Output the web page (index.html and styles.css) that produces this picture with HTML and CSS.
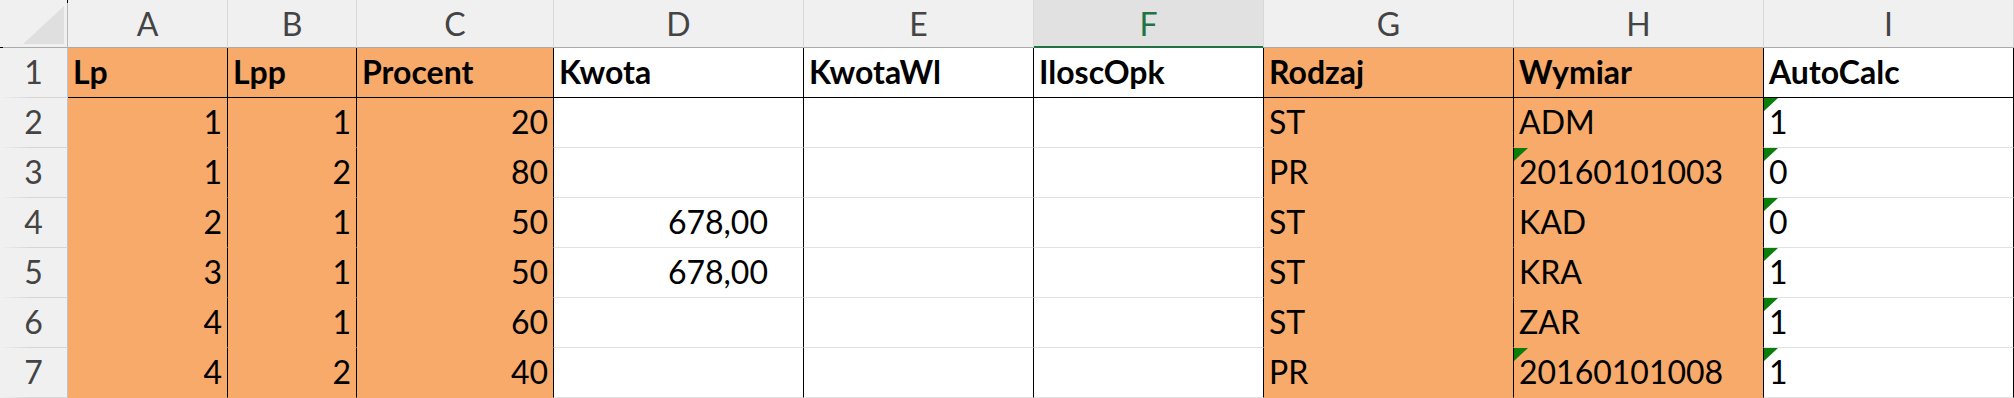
FILE: index.html
```html
<!DOCTYPE html>
<html lang="pl">
<head>
<meta charset="utf-8">
<title>Arkusz1</title>
<link rel="stylesheet" href="styles.css">
</head>
<body>
<div class="sheet">
  <div class="corner"><span class="corner-tri"></span></div>
  <div class="colhead">A</div>
  <div class="colhead">B</div>
  <div class="colhead">C</div>
  <div class="colhead">D</div>
  <div class="colhead">E</div>
  <div class="colhead sel">F</div>
  <div class="colhead">G</div>
  <div class="colhead">H</div>
  <div class="colhead">I</div>

  <div class="rowhead">1</div>
  <div class="cell fill title">Lp</div>
  <div class="cell fill title">Lpp</div>
  <div class="cell fill title">Procent</div>
  <div class="cell title">Kwota</div>
  <div class="cell title">KwotaWl</div>
  <div class="cell title">IloscOpk</div>
  <div class="cell fill title">Rodzaj</div>
  <div class="cell fill title">Wymiar</div>
  <div class="cell title">AutoCalc</div>

  <div class="rowhead">2</div>
  <div class="cell fill num">1</div>
  <div class="cell fill num">1</div>
  <div class="cell fill num">20</div>
  <div class="cell money"></div>
  <div class="cell"></div>
  <div class="cell"></div>
  <div class="cell fill">ST</div>
  <div class="cell fill">ADM</div>
  <div class="cell flag">1</div>

  <div class="rowhead">3</div>
  <div class="cell fill num">1</div>
  <div class="cell fill num">2</div>
  <div class="cell fill num">80</div>
  <div class="cell money"></div>
  <div class="cell"></div>
  <div class="cell"></div>
  <div class="cell fill">PR</div>
  <div class="cell fill flag">20160101003</div>
  <div class="cell flag">0</div>

  <div class="rowhead">4</div>
  <div class="cell fill num">2</div>
  <div class="cell fill num">1</div>
  <div class="cell fill num">50</div>
  <div class="cell money">678,00</div>
  <div class="cell"></div>
  <div class="cell"></div>
  <div class="cell fill">ST</div>
  <div class="cell fill">KAD</div>
  <div class="cell flag">0</div>

  <div class="rowhead">5</div>
  <div class="cell fill num">3</div>
  <div class="cell fill num">1</div>
  <div class="cell fill num">50</div>
  <div class="cell money">678,00</div>
  <div class="cell"></div>
  <div class="cell"></div>
  <div class="cell fill">ST</div>
  <div class="cell fill">KRA</div>
  <div class="cell flag">1</div>

  <div class="rowhead">6</div>
  <div class="cell fill num">4</div>
  <div class="cell fill num">1</div>
  <div class="cell fill num">60</div>
  <div class="cell money"></div>
  <div class="cell"></div>
  <div class="cell"></div>
  <div class="cell fill">ST</div>
  <div class="cell fill">ZAR</div>
  <div class="cell flag">1</div>

  <div class="rowhead">7</div>
  <div class="cell fill num">4</div>
  <div class="cell fill num">2</div>
  <div class="cell fill num">40</div>
  <div class="cell money"></div>
  <div class="cell"></div>
  <div class="cell"></div>
  <div class="cell fill">PR</div>
  <div class="cell fill flag">20160101008</div>
  <div class="cell flag">1</div>
</div>
</body>
</html>
```

FILE: styles.css
```css
* {
  box-sizing: border-box;
}

html,
body {
  margin: 0;
  padding: 0;
  background: #ffffff;
}

body {
  font-family: Lato, "Open Sans", "Liberation Sans", sans-serif;
  font-size: 32px;
  color: #000000;
}

/* worksheet grid: row-number column + columns A..I */
.sheet {
  display: grid;
  grid-template-columns: 68px 160px 129px 197px 250px 230px 230px 250px 250px 250px;
  grid-template-rows: 48px repeat(7, 50px);
  width: 2014px;
}

/* top-left select-all box */
.corner {
  position: relative;
  display: flex;
  align-items: flex-end;
  justify-content: flex-end;
  padding: 0 3px 3px 0;
  background: #f0f0f0;
  border-right: 1px solid #b9b9b9;
  border-bottom: 1px solid #ababab;
}

.corner::before {
  content: "";
  position: absolute;
  top: 0;
  right: -1px;
  width: 1px;
  height: 3px;
  background: #000000;
}

.corner::after {
  content: "";
  position: absolute;
  left: 0;
  bottom: -1px;
  width: 3px;
  height: 1px;
  background: #000000;
}

.corner-tri {
  width: 41px;
  height: 38px;
  background: #dfdfdf;
  clip-path: polygon(100% 0, 100% 100%, 0 100%);
}

/* column letters */
.colhead {
  display: flex;
  align-items: flex-end;
  justify-content: center;
  padding-bottom: 3px;
  line-height: 40px;
  color: #444444;
  background: #f0f0f0;
  border-right: 1px solid #d9d9d9;
  border-bottom: 1px solid #ababab;
}

.colhead.sel {
  color: #217346;
  background: #e1e1e1;
  border-bottom: 1px solid #217346;
  box-shadow: inset 0 -1px 0 #217346;
}

/* row numbers, separator fades in from the left */
.rowhead {
  display: flex;
  align-items: flex-end;
  justify-content: center;
  padding-bottom: 5px;
  line-height: 40px;
  color: #444444;
  background-color: #f0f0f0;
  background-image: linear-gradient(to right, rgba(214, 214, 214, 0), #d6d6d6 45%);
  background-repeat: no-repeat;
  background-position: left bottom;
  background-size: 100% 1px;
  background-origin: border-box;
  border-right: 1px solid #bfc3c7;
  border-bottom: 1px solid transparent;
}

/* data cells */
.cell {
  position: relative;
  display: flex;
  align-items: flex-end;
  padding: 0 5px 5px 5px;
  line-height: 40px;
  white-space: nowrap;
  overflow: hidden;
  background: #ffffff;
  border-right: 1px solid #000000;
  border-bottom: 1px solid #e1e1e1;
}

.cell.fill {
  background: #f7aa6a;
  border-bottom-color: #f7aa6a;
}

.cell.title {
  font-weight: 700;
  border-bottom-color: #000000;
}

.cell.num {
  justify-content: flex-end;
}

.cell.money {
  justify-content: flex-end;
  padding-right: 35px;
}

/* green "number stored as text" marker */
.cell.flag::before {
  content: "";
  position: absolute;
  left: 0;
  top: 0;
  width: 14px;
  height: 13px;
  background: #0a7d0a;
  clip-path: polygon(0 0, 100% 0, 0 100%);
}
```
